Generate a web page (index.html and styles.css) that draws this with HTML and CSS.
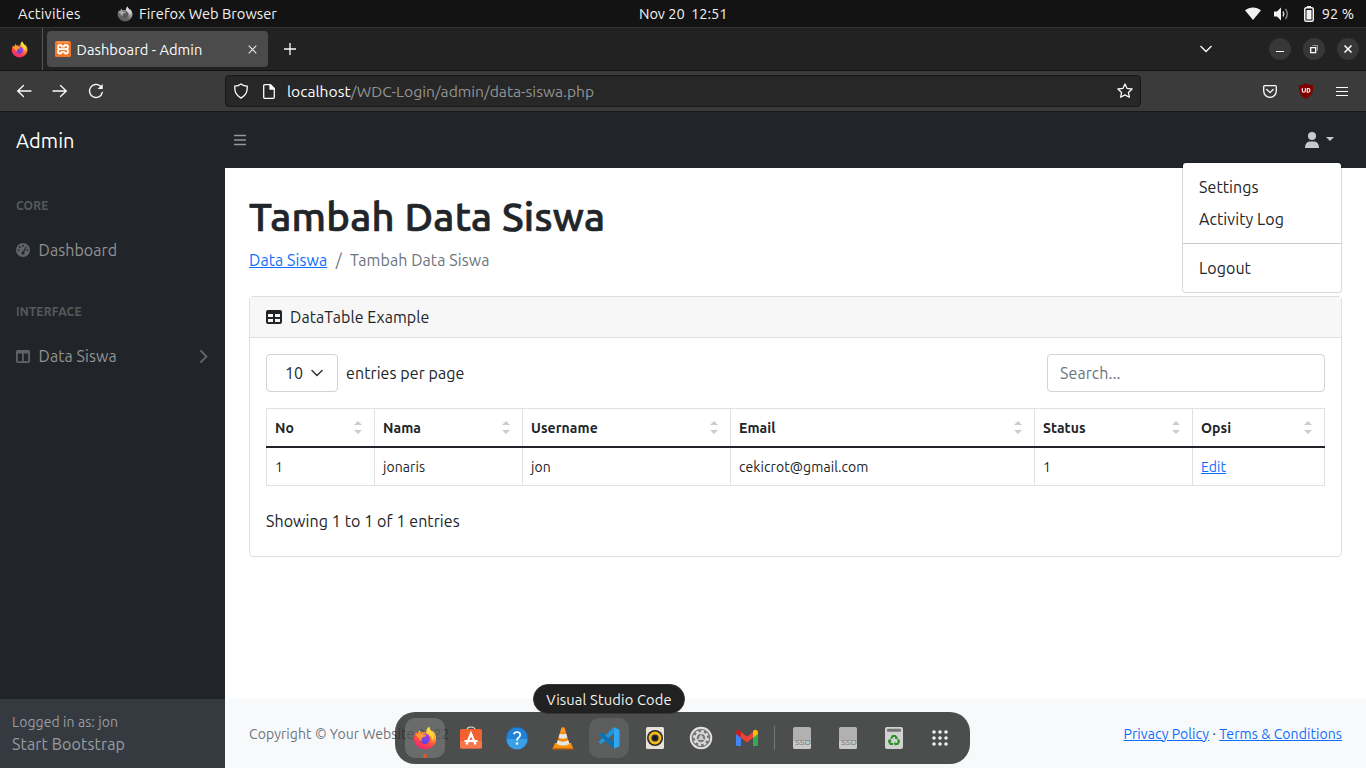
FILE: index.html
```html
<!DOCTYPE html>
<html lang="id">
<head>
<meta charset="utf-8">
<title>Dashboard - Admin</title>
<link rel="stylesheet" href="styles.css">
</head>
<body>
<svg class="defs" width="0" height="0">
  <defs>
    <linearGradient id="fxg" x1=".8" y1="0" x2=".3" y2="1"><stop offset="0" stop-color="#fff04a"/><stop offset=".35" stop-color="#ffa52b"/><stop offset=".65" stop-color="#ff4b3e"/><stop offset="1" stop-color="#f2207c"/></linearGradient>
    <linearGradient id="fxb" x1=".7" y1="0" x2=".3" y2="1"><stop offset="0" stop-color="#a33bef"/><stop offset="1" stop-color="#5b45d8"/></linearGradient>
    <symbol id="firefox" viewBox="0 0 24 24">
      <path fill="url(#fxg)" d="M3.2 6.2 4.6 8C5 6.6 5.500 5 6.700 3.800c.2 1.400 1 2.300 2 2.900C11 6 12.300 6.400 13 7c.1-2.800.8-5 3.200-6.300.1 2 1.300 3 2.800 4.800l.8-.6C22.500 7.800 23.200 10 23.200 12.500 23.200 18.600 18.300 23.200 12 23.200S1 18.500 1 12.500c0-2.400.8-4.600 2.200-6.300z"/>
      <circle fill="url(#fxb)" cx="11.800" cy="12.800" r="5.200"/>
      <path fill="#ff9a2b" d="M2.500 8.500c3-1.500 5.500-1 7.500 0 1.700-.3 3 .3 3.500 1.300-1.300 1.300-3.500.8-4.600 2.200-.8 1-.4 2.500.7 3.500-2.600-.4-3.300-2.800-7.100-7z"/>
      <path fill="#ffd83d" d="M16.200.7c.1 2 1.300 3 2.800 4.800 2 3 2 6.500.5 9.500.2-3.500-1.500-5.500-3.600-6.500C13.500 7 13.500 3 16.200.7z"/>
    </symbol>
    <symbol id="ssd" viewBox="0 0 20 24"><rect x="1" y="1" width="18" height="22" rx="2" fill="#b1b1b1"/><path d="M1 15v6a2 2 0 0 0 2 2h14a2 2 0 0 0 2-2v-6z" fill="#c9c9c9"/><text x="3" y="19.300" font-size="7.500" textLength="16" lengthAdjust="spacingAndGlyphs" fill="#7b7b7b" font-family="Noto Sans, sans-serif">SSD</text></symbol>
  </defs>
</svg>

<header class="panel">
  <span class="activities">Activities</span>
  <svg class="panel-fx" viewBox="0 0 24 24"><use href="#firefox"/></svg>
  <span class="app-name">Firefox Web Browser</span>
  <span class="clock">Nov 20&nbsp; 12:51</span>
  <div class="tray">
    <svg width="16" height="13" viewBox="0 0 16 13"><path fill="#f2f2f2" d="M0 3.300C4.500-.6 11.500-.6 16 3.300L8 13z"/></svg>
    <svg class="volume" width="15" height="14" viewBox="0 0 15 14"><path fill="#f2f2f2" d="M0 4.500h3L7 .5v13L3 9.500H0z"/><path d="M9 4.500q1.600 2.500 0 5" fill="none" stroke="#ddd" stroke-width="1.400"/><path d="M11.500 2q3.600 5 0 10" fill="none" stroke="#888" stroke-width="1.400"/></svg>
    <svg class="battery" width="10" height="16" viewBox="0 0 10 16"><path fill="#f2f2f2" d="M3 0h4v2H3z"/><rect x=".75" y="1.750" width="8.500" height="13.500" rx="1.500" fill="none" stroke="#f2f2f2" stroke-width="1.500"/><path fill="#f2f2f2" d="M2.500 4h5v9.500h-5z"/></svg>
    <span class="percent">92 %</span>
  </div>
</header>

<div class="tabstrip">
  <div class="pinned"><svg width="17" height="17" viewBox="0 0 24 24"><use href="#firefox"/></svg></div>
  <div class="tab">
    <svg width="16" height="16" viewBox="0 0 16 16"><rect width="16" height="16" rx="1.500" fill="#f37623"/><path d="M2 1.200h12" stroke="#fbb98c" stroke-width=".8"/><path d="M7.200 6.500Q7 4 5 4T3 6t2.200 2.200Q3 8.500 3 10.500t2 2 2.200-2.300M8.800 6.500Q9 4 11 4t2 2-2.200 2.200q2.200.3 2.200 2.300t-2 2-2.200-2.300M5.500 8.200h5" fill="none" stroke="#fff" stroke-width="1.800" stroke-linejoin="round"/></svg>
    <span class="tab-title">Dashboard - Admin</span>
    <svg class="tab-close" width="9" height="9" viewBox="0 0 9 9"><path d="m.7.7 7.600 7.600M8.300.7.7 8.300" stroke="#e8e8e8" stroke-width="1.100"/></svg>
  </div>
  <svg class="new-tab" width="12" height="12" viewBox="0 0 12 12"><path d="M6 0v12M0 6h12" stroke="#fbfbfe" stroke-width="1.300"/></svg>
  <div class="window-controls">
    <svg class="all-tabs" width="12" height="8" viewBox="0 0 12 8"><path d="m.5 1 5.500 5.500L11.500 1" fill="none" stroke="#fbfbfe" stroke-width="1.300"/></svg>
    <span class="control"><svg width="22" height="22"><path d="M7 13.500h8" stroke="#fff"/></svg></span>
    <span class="control"><svg width="22" height="22"><path d="M7.700 9.700h5v5h-5z" fill="none" stroke="#fff" stroke-width="1.300"/><path d="M9.500 7.500h5v5" fill="none" stroke="#999"/></svg></span>
    <span class="control"><svg width="22" height="22"><path d="m7.500 7.500 7 7m0-7-7 7" stroke="#fff" stroke-width="1.500"/></svg></span>
  </div>
</div>

<div class="toolbar">
  <div class="nav-buttons">
    <svg width="16" height="16" viewBox="0 0 16 16"><path d="M15 8H1.500M7.500 2.500 1.800 8l5.700 5.500"/></svg>
    <svg width="16" height="16" viewBox="0 0 16 16"><path d="M1 8h13.500M8.500 2.500 14.200 8l-5.700 5.500"/></svg>
    <svg width="16" height="16" viewBox="0 0 16 16"><path d="M14.300 9.500A6.500 6.500 0 1 1 12.500 3.300"/><path d="M14.700 1v5H9.700z" fill="#fbfbfe" stroke="none"/></svg>
  </div>
  <div class="urlbar">
    <svg width="16" height="16" viewBox="0 0 16 16"><path d="M8 .9q2.500 2 6.300 2.300c0 5-.5 8.500-6.300 11.900C2.200 11.700 1.700 8.200 1.700 3.200Q5.500 2.900 8 .9z"/></svg>
    <svg class="page-icon" width="12" height="15" viewBox="0 0 12 15"><path d="M1.700.7h5.800l3.800 3.800v8.800a1 1 0 0 1-1 1H1.700a1 1 0 0 1-1-1V1.700a1 1 0 0 1 1-1z"/><path d="M7 .7V5h4.300z" fill="#fbfbfe"/></svg>
    <span class="url"><b>localhost</b>/WDC-Login/admin/data-siswa.php</span>
    <svg class="star" width="16" height="16" viewBox="0 0 16 16"><path d="m8 .9 2.100 4.500 5 .6-3.700 3.400 1 4.900L8 11.900l-4.400 2.400 1-4.900L.9 6l5-.6z"/></svg>
  </div>
  <div class="extensions">
    <svg width="14" height="13" viewBox="0 0 14 13"><path d="M1.700.7h10.600a1 1 0 0 1 1 1V6A6.300 6.300 0 0 1 .7 6V1.700a1 1 0 0 1 1-1z"/><path d="M3.800 4.500 7 7.600l3.200-3.100"/></svg>
    <svg class="shield" width="14" height="16" viewBox="0 0 14 16"><path d="M7 .2C9 1.600 11 2 14 2c0 7 0 10-7 14C0 12 0 9 0 2c3 0 5-.4 7-1.800z" fill="#800000" stroke="none"/><path d="M3.300 5.500V8q0 1.200 1.500 1.200T6.300 8V5.500M8.200 5.500v3.700h.9q1.900 0 1.900-1.850T9.100 5.500z" stroke="#fff" stroke-width="1.100"/></svg>
    <svg width="12" height="11" viewBox="0 0 12 11"><path d="M0 1.500h12M0 5.500h12M0 9.500h12" stroke-width="1.100"/></svg>
  </div>
</div>

<div class="page">
  <nav class="topnav">
    <span class="brand">Admin</span>
    <svg class="menu-toggle" width="12" height="12" viewBox="0 0 12 12"><path d="M.5 1.500h11M.5 6h11M.5 10.500h11" stroke="#95979a" stroke-width="1.400" stroke-linecap="round"/></svg>
    <div class="user">
      <svg width="14" height="16" viewBox="0 0 14 16"><circle cx="7" cy="4" r="4" fill="#c8c9ca"/><path d="M0 16c0-4 2-6.500 5-6.500h4c3 0 5 2.500 5 6.500z" fill="#c8c9ca"/></svg>
      <span class="caret"></span>
      <div class="dropdown">
        <a>Settings</a>
        <a>Activity Log</a>
        <hr>
        <a>Logout</a>
      </div>
    </div>
  </nav>
  <div class="body">
    <aside class="sidebar">
      <div class="menu">
        <div class="heading">Core</div>
        <a class="link"><svg width="14" height="14" viewBox="0 0 14 14"><circle cx="7" cy="7" r="7" fill="#606367"/><g fill="#212529"><circle cx="7" cy="2.700" r=".9"/><circle cx="3.800" cy="4" r=".9"/><circle cx="2.600" cy="7.200" r=".9"/><circle cx="11.400" cy="7.200" r=".9"/><circle cx="7" cy="10" r="1.600"/></g><path d="m7 10 3-6" stroke="#212529" stroke-width="1.100"/></svg><span>Dashboard</span></a>
        <div class="heading">Interface</div>
        <a class="link"><svg width="14" height="13" viewBox="0 0 14 13"><path fill="#606367" fill-rule="evenodd" d="M1.700 0h10.600A1.700 1.700 0 0 1 14 1.700v9.600a1.700 1.700 0 0 1-1.700 1.700H1.700A1.700 1.700 0 0 1 0 11.300V1.700A1.700 1.700 0 0 1 1.700 0zM1.800 3.500v7.700h4.300V3.500zm6 0v7.700h4.400V3.500z"/></svg><span>Data Siswa</span><svg class="chevron" width="8" height="13" viewBox="0 0 8 13"><path d="m1 1 5.500 5.500L1 12" fill="none" stroke="#606367" stroke-width="1.900" stroke-linecap="round"/></svg></a>
      </div>
      <div class="sidebar-footer"><div class="logged">Logged in as: jon</div><div class="start">Start Bootstrap</div></div>
    </aside>
    <div class="content">
      <main>
        <h1>Tambah Data Siswa</h1>
        <div class="breadcrumb"><a>Data Siswa</a><span class="slash">/</span><span class="current">Tambah Data Siswa</span></div>
        <section class="card">
          <div class="card-header"><svg width="16" height="14" viewBox="0 0 16 14"><path fill="#212529" fill-rule="evenodd" d="M2 0h12a2 2 0 0 1 2 2v10a2 2 0 0 1-2 2H2a2 2 0 0 1-2-2V2a2 2 0 0 1 2-2zm0 4v3h5V4zm7 0v3h5V4zM2 9v3h5V9zm7 0v3h5V9z"/></svg><span>DataTable Example</span></div>
          <div class="card-body">
            <div class="controls">
              <div class="select"><span>10</span><svg width="12" height="8" viewBox="0 0 12 8"><path d="m1 1.500 5 5 5-5" fill="none" stroke="#343a40" stroke-width="1.600" stroke-linecap="round" stroke-linejoin="round"/></svg></div>
              <span class="per-page">entries per page</span>
              <div class="search">Search...</div>
            </div>
            <table>
              <thead><tr><th class="c-no"><div><span>No</span><i></i></div></th><th class="c-nama"><div><span>Nama</span><i></i></div></th><th class="c-user"><div><span>Username</span><i></i></div></th><th class="c-email"><div><span>Email</span><i></i></div></th><th class="c-status"><div><span>Status</span><i></i></div></th><th class="c-opsi"><div><span>Opsi</span><i></i></div></th></tr></thead>
              <tbody><tr><td>1</td><td>jonaris</td><td>jon</td><td>cekicrot@gmail.com</td><td>1</td><td><a>Edit</a></td></tr></tbody>
            </table>
            <div class="info">Showing 1 to 1 of 1 entries</div>
          </div>
        </section>
      </main>
      <footer><span>Copyright © Your Website 2022</span><div><a>Privacy Policy</a><span class="dot">·</span><a>Terms &amp; Conditions</a></div></footer>
    </div>
  </div>
</div>

<div class="dock">
  <span class="app running"><svg width="24" height="24" viewBox="0 0 24 24"><use href="#firefox"/></svg></span>
  <span class="app"><svg width="24" height="24" viewBox="0 0 24 24"><path d="M8 4q0-3 4-3t4 3" fill="none" stroke="#e8dfc8" stroke-width="1.200"/><rect x="1" y="3" width="22" height="19.500" rx="1.500" fill="#f1612f"/><path d="M1 15h22v6a1.500 1.500 0 0 1-1.500 1.500h-19A1.500 1.500 0 0 1 1 21z" fill="#f5774b"/><path d="m7.500 18.500 4.500-11 4.500 11M5.500 15h13" fill="none" stroke="#fff" stroke-width="2.200"/></svg></span>
  <span class="app"><svg width="24" height="24" viewBox="0 0 24 24"><circle cx="12" cy="12" r="11" fill="#2182d8" stroke="#2b5f8c"/><path d="M1.500 13h21a10.500 10.500 0 0 1-21 0z" fill="#3a9fe6"/><path d="M8.800 8.200Q9.500 6 12 6q3.200 0 3.200 2.800 0 1.700-1.800 2.900-1.400 1-1.400 2.900" fill="none" stroke="#fff" stroke-width="1.700"/><circle cx="12" cy="17.500" r="1.200" fill="#fff"/></svg></span>
  <span class="app"><svg width="24" height="24" viewBox="0 0 24 24"><path d="M4 17h16l2.500 6h-21z" fill="#f7920c"/><path d="M1.500 22h21v1.500h-21z" fill="#c86508"/><path d="M10.700 1.500q1.300-1 2.600 0L18.500 18q-6.500 3-13 0z" fill="#f7880c"/><path d="m9.400 5.500 1-3.200h3.200l1 3.200q-2.600 1.500-5.200 0z" fill="#ff9e25"/><path d="m8.800 7.500-1.200 4q4.400 2.400 8.800 0l-1.200-4q-3.200 1.600-6.400 0zM6.700 14.300l-1.200 3.800q6.500 3 13 0l-1.200-3.800q-5.300 2.700-10.600 0z" fill="#e6e6e6"/></svg></span>
  <span class="app hover"><svg width="24" height="24" viewBox="0 0 24 24"><path d="m2 16 15-14.500v5.300L4 17.500z" fill="#1f96dc" stroke="#1f96dc"/><path d="m2 8.500 15 13.700V17L4 6.800z" fill="#0b72b8" stroke="#0b72b8"/><path d="m17 1.200 5.500 2.500v16.600L17 22.800z" fill="#2ca9f2"/></svg></span>
  <span class="app"><svg width="24" height="24" viewBox="0 0 24 24"><rect x="3" y="1" width="18" height="22" rx="1.500" fill="#e8e1d6"/><circle cx="12" cy="12" r="8" fill="#292a2b"/><circle cx="12" cy="12" r="5" fill="none" stroke="#f2b81c" stroke-width="2.800"/><circle cx="12" cy="12" r="1.800" fill="#111827"/></svg></span>
  <span class="app"><svg width="24" height="24" viewBox="0 0 24 24"><circle cx="12" cy="12" r="10.300" fill="#777" stroke="#e2e2e2" stroke-width="1.900"/><circle cx="12" cy="12" r="6.800" fill="none" stroke="#dedede" stroke-width="2.400" stroke-dasharray="2.670 2.670"/><circle cx="12" cy="12" r="5.200" fill="none" stroke="#dedede" stroke-width="1.800"/><circle cx="12" cy="12" r="2.200" fill="#c9c9c9"/><path d="M12 12V7m0 5 4.300 2.500M12 12l-4.300 2.500" stroke="#ccc" stroke-width="1.200"/></svg></span>
  <span class="app"><svg width="24" height="24" viewBox="0 0 24 24"><path d="M1 7v11.500A1.500 1.500 0 0 0 2.500 20H6V10z" fill="#4285f4"/><path d="M18 10v10h3.500a1.500 1.500 0 0 0 1.500-1.500V7z" fill="#34a853"/><path d="m6 6 6 4.700L18 6v5.800l-6 4.700-6-4.700z" fill="#ea4335"/><path d="M1 7c0-3.200 2.500-4 4.500-2.500L6 5v6.800L1 8z" fill="#c5221f"/><path d="M23 7c0-3.200-2.500-4-4.500-2.500L18 5v6.800L23 8z" fill="#fbbc04"/></svg></span>
  <span class="separator"></span>
  <span class="app"><svg width="20" height="24"><use href="#ssd"/></svg></span>
  <span class="app"><svg width="20" height="24"><use href="#ssd"/></svg></span>
  <span class="app"><svg width="20" height="24" viewBox="0 0 20 24"><rect x="1" y="1" width="18" height="22" rx="2" fill="#d2d2d2"/><rect x="3" y="2.800" width="14" height="3" rx=".8" fill="#747474"/><g fill="none" stroke="#26921f" stroke-width="2"><path d="m7 12.700 1.700-2.700h2.500l1.300 2"/><path d="m14 13.500 1 2-1.500 2.500h-2.300"/><path d="M9 18H6.500L5 15.500l.8-1.500"/></g><path d="m13.800 10.500-.3 3-2.700-1zM11.500 15.800v4l-2-2zM3.800 14l3-.8.8 3z" fill="#26921f"/></svg></span>
  <span class="app"><svg width="16" height="16" viewBox="0 0 16 16" fill="#eee"><circle cx="2" cy="2" r="1.800"/><circle cx="8" cy="2" r="1.800"/><circle cx="14" cy="2" r="1.800"/><circle cx="2" cy="8" r="1.800"/><circle cx="8" cy="8" r="1.800"/><circle cx="14" cy="8" r="1.800"/><circle cx="2" cy="14" r="1.800"/><circle cx="8" cy="14" r="1.800"/><circle cx="14" cy="14" r="1.800"/></svg></span>
</div>
<div class="tooltip">Visual Studio Code</div>
</body>
</html>
```
FILE: styles.css
```css
* { box-sizing: border-box; }
body { margin: 0; height: 768px; overflow: hidden; display: flex; flex-direction: column; font: 16px/24px Ubuntu, "Noto Sans", sans-serif; color: #212529; background: #fff; white-space: nowrap; }
svg { display: block; flex: none; }
.defs { position: absolute; }

/* Desktop panel */
.panel { display: grid; grid-template-columns: 117px 22px 500px 1fr auto; align-items: center; height: 27px; background: #131313; color: #f2f2f2; font-size: 14.667px; padding-right: 12px; }
.activities { padding-left: 18px; letter-spacing: .25px; }
.panel-fx { width: 16px; height: 16px; filter: grayscale(1); }
.clock { letter-spacing: -.08px; }
.tray { display: flex; align-items: center; }
.volume { margin-left: 13px; }
.battery { margin-left: 15px; }
.percent { margin-left: 8px; }

/* Browser tabs */
.tabstrip { display: flex; align-items: center; height: 44px; background: #222; border-top: 1px solid #343434; border-bottom: 1px solid #131313; font-size: 14.667px; color: #fbfbfe; padding-right: 7px; }
.pinned { width: 43px; height: 100%; display: flex; align-items: center; padding-left: 11px; border-right: 1px solid #555; }
.tab { display: flex; align-items: center; width: 221px; height: 36px; margin-left: 4px; padding: 0 11px 0 8px; border-radius: 4px; background: #4b4b4b; }
.tab-title { margin-left: 5.6px; padding-top: 1px; letter-spacing: .04px; }
.tab-close { margin-left: auto; }
.new-tab { margin-left: 16px; }
.window-controls { display: flex; align-items: center; gap: 12px; margin-left: auto; }
.all-tabs { margin-right: 45px; }
.control { width: 22px; height: 22px; border-radius: 50%; background: #373737; }

/* Browser toolbar */
.toolbar { display: flex; align-items: center; height: 41px; background: #3b3b3b; border-bottom: 1px solid #181818; padding: 0 18px 0 16px; }
.toolbar svg { fill: none; stroke: #fbfbfe; stroke-width: 1.3; stroke-linecap: round; stroke-linejoin: round; }
.nav-buttons { display: flex; gap: 20px; width: 209px; }
.urlbar { display: flex; align-items: center; width: 916px; height: 32px; padding: 0 7px; border: 1px solid #181818; border-radius: 4px; background: #272727; }
.page-icon { margin-left: 14px; }
.url { margin-left: 12px; font-size: 15.65px; color: #939393; }
.url b { font-weight: 400; color: #fbfbfe; }
.star { margin-left: auto; }
.extensions { display: flex; align-items: center; gap: 23px; margin-left: auto; }
.shield { margin-left: -1px; }

/* Admin page */
.page { flex: 1; display: flex; flex-direction: column; min-height: 0; letter-spacing: .08px; }
.topnav { display: flex; align-items: center; height: 56px; background: #212529; padding-right: 32px; }
.brand { width: 234px; padding: 2px 0 0 16px; font-size: 20px; color: #fff; }
.user { position: relative; display: flex; align-items: center; margin-left: auto; }
.caret { margin: -3px 0 0 7px; border: 4.5px solid transparent; border-top-color: #c8c9ca; border-bottom: 0; }
.dropdown { position: absolute; z-index: 2; top: 30px; right: -8px; width: 160px; height: 131px; padding: 8px 0; border: 1px solid rgba(0, 0, 0, .15); border-radius: 4px; background: #fff padding-box; }
.dropdown a { display: block; height: 32px; padding: 4px 16px; }
.dropdown hr { margin: 8px 0; border: 0; border-top: 1px solid #c8c9ca; }
.body { flex: 1; display: flex; min-height: 0; }
.sidebar { display: flex; flex-direction: column; width: 225px; background: #212529; color: #909294; }
.menu { flex: 1; }
.heading { padding: 29px 16px 11px; font-size: 12px; line-height: 18px; font-weight: 700; text-transform: uppercase; letter-spacing: .2px; color: #56595c; }
.link { display: flex; align-items: center; height: 48px; padding: 0 17px 0 16px; }
.link span { margin-left: 8.5px; }
.chevron { margin-left: auto; }
.sidebar-footer { height: 69px; padding: 13px 12px 12px; background: #343a40; color: #999c9f; }
.logged { font-size: 14px; line-height: 20px; }
.start { letter-spacing: .14px; }
.content { flex: 1; display: flex; flex-direction: column; }
main { flex: 1; padding: 25px 24px 0; }
h1 { margin: 0; font-size: 40px; line-height: 48px; font-weight: 500; letter-spacing: .25px; -webkit-text-stroke: .7px #212529; }
.breadcrumb { display: flex; margin: 7px 0 24px; color: #6c757d; }
.breadcrumb a, footer a, td a { color: #0d6efd; text-decoration: underline; }
.slash { width: 22.6px; text-align: center; }
.card { height: 261px; border: 1px solid #dfdfdf; border-radius: 4px; }
.card-header { display: flex; align-items: center; gap: 8px; height: 41px; padding: 0 16px; background: #f7f7f7; border-bottom: 1px solid #dfdfdf; }
.card-body { padding: 16px; }
.controls { display: flex; align-items: center; margin-bottom: 16px; }
.select { display: flex; align-items: center; gap: 8px; width: 72px; height: 38px; padding-left: 18px; border: 1px solid #ced4da; border-radius: 4px; }
.per-page { margin-left: 8px; }
.search { width: 278px; height: 38px; margin-left: auto; padding: 6px 12px; border: 1px solid #ced4da; border-radius: 4px; color: #6c757d; }
table { width: 1059px; table-layout: fixed; border-collapse: separate; border-spacing: 0; border-top: 1px solid #dee2e6; font-size: 14px; line-height: 20px; }
th, td { padding: 1px 9px 0 8px; box-shadow: inset -1px 0 #dee2e6; text-align: left; }
th:first-child, td:first-child { padding-left: 9px; box-shadow: inset -1px 0 #dee2e6, inset 1px 0 #dee2e6; }
th { height: 39px; border-bottom: 2px solid #212529; }
td { height: 38px; border-bottom: 1px solid #dee2e6; }
th div { display: flex; align-items: center; justify-content: space-between; }
th i { width: 8px; height: 13px; margin: -1px 4px 0 0; display: flex; flex-direction: column; justify-content: space-between; }
th i::before, th i::after { content: ""; border: 4px solid transparent; }
th i::before { border-bottom: 4px solid #ccc; border-top: 0; }
th i::after { border-top: 4px solid #ccc; border-bottom: 0; }
.c-no { width: 109px; }
.c-nama { width: 148px; }
.c-user { width: 208px; }
.c-email { width: 304px; }
.c-status { width: 158px; }
.c-opsi { width: 132px; }
.info { margin-top: 23px; }
footer { display: flex; align-items: center; justify-content: space-between; height: 69px; padding: 0 24px; background: #f8f9fa; color: #6c757d; font-size: 14px; }
.dot { display: inline-block; width: 10px; text-align: center; color: #212529; }

/* Dock */
.dock { position: absolute; left: 395px; top: 712px; display: flex; align-items: center; gap: 6px; width: 575px; height: 52px; padding: 0 10px; border-radius: 20px; background: rgba(33, 35, 35, .8); }
.app { position: relative; display: flex; align-items: center; justify-content: center; width: 40px; height: 40px; border-radius: 10px; }
.running { background: rgba(255, 255, 255, .17); }
.running::after { content: ""; position: absolute; bottom: 0; left: 18px; width: 4px; height: 4px; border-radius: 50%; background: #e95420; }
.hover { background: rgba(255, 255, 255, .09); }
.separator { width: 3px; height: 24px; border: solid transparent; border-width: 0 1px; background: #777 content-box; }
.tooltip { position: absolute; left: 533px; top: 684px; width: 152px; height: 30px; border: 1px solid #363636; border-radius: 15px; background: #212121; color: #f2f2f2; font-size: 14.667px; letter-spacing: .15px; line-height: 29px; text-align: center; }
```
